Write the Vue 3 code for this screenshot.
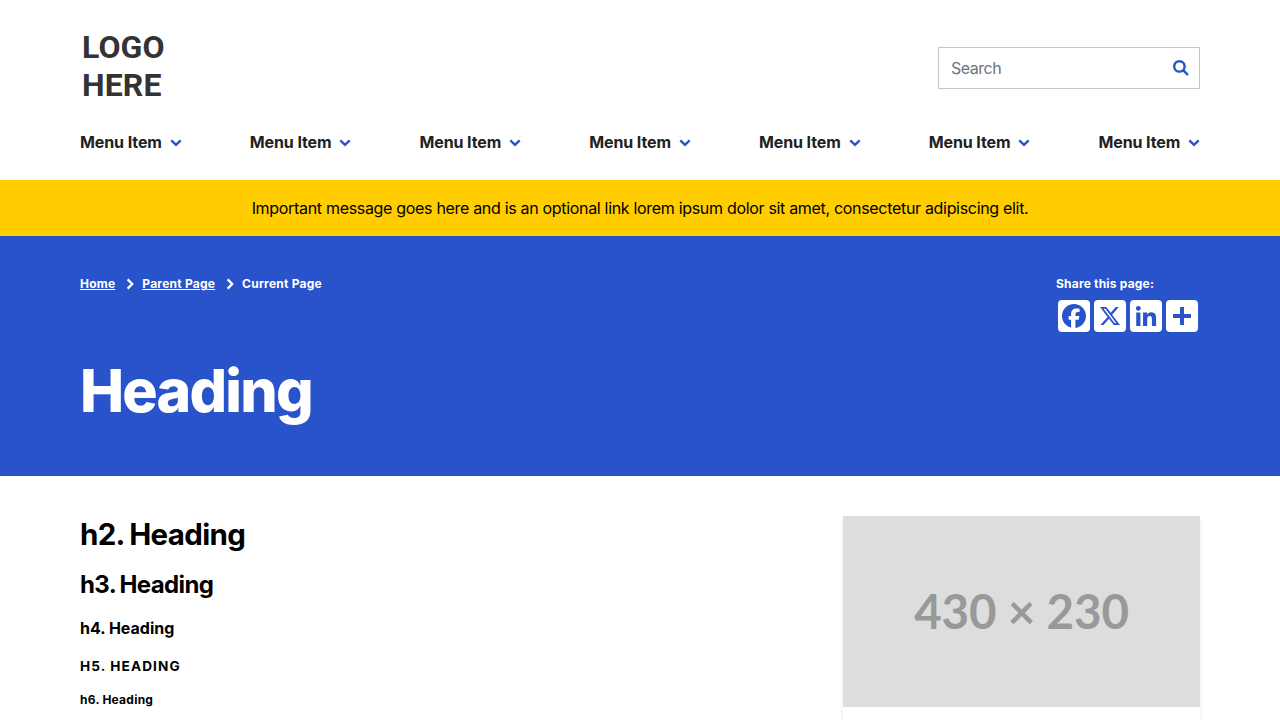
<script setup>
const menu = Array.from({ length: 7 }, (_, i) => ({ id: i, label: 'Menu Item' }))
</script>

<template>
  <div class="page">
    <header class="header wrap">
      <div class="top">
        <div class="logo">LOGO<br />HERE</div>
        <div class="search">
          <span>Search</span>
          <svg class="glass" viewBox="0 0 16 16" width="16" height="16">
            <circle cx="6.4" cy="6.4" r="5.2" />
            <path d="M10.4 10.4L14.3 14.3" />
          </svg>
        </div>
      </div>
      <nav class="menu">
        <a v-for="item in menu" :key="item.id" class="item">
          <span class="label">{{ item.label }}</span>
          <svg class="chev" viewBox="0 0 12 8" width="12" height="8"><path d="M1.3 1.3L6 5.9L10.7 1.3" /></svg>
        </a>
      </nav>
    </header>

    <div class="alert"><span>Important message goes here and is an optional link lorem ipsum dolor sit amet, consectetur adipiscing elit.</span></div>

    <section class="hero">
      <div class="wrap">
        <div class="hero-top">
          <nav class="crumbs">
            <a class="home">Home</a>
            <svg class="arrow" viewBox="0 0 8 12" width="8" height="12"><path d="M1.6 1.4L6.2 6L1.6 10.6" /></svg>
            <a class="parent">Parent Page</a>
            <svg class="arrow" viewBox="0 0 8 12" width="8" height="12"><path d="M1.6 1.4L6.2 6L1.6 10.6" /></svg>
            <span class="current">Current Page</span>
          </nav>
          <div class="share">
            <div class="share-label"><span>Share this page:</span></div>
            <div class="share-icons">
              <svg viewBox="0 0 32 32"><path d="M28 16c0-6.627-5.373-12-12-12S4 9.373 4 16c0 5.628 3.875 10.35 9.101 11.647v-7.98h-2.474V16H13.1v-1.58c0-4.085 1.849-5.978 5.859-5.978.76 0 2.072.15 2.608.298v3.325c-.283-.03-.775-.045-1.386-.045-1.967 0-2.728.745-2.728 2.683V16h3.92l-.673 3.667h-3.247v8.245C23.395 27.195 28 22.135 28 16" /></svg>
              <svg viewBox="0 0 32 32"><path d="M21.751 7h3.067l-6.7 7.658L26 25.078h-6.172l-4.833-6.32-5.531 6.32h-3.07l7.167-8.19L6 7h6.328l4.37 5.777zm-1.076 16.242h1.7L11.404 8.74H9.58z" /></svg>
              <svg viewBox="0 0 32 32"><path d="M6.227 12.61h4.19v13.48h-4.19zm2.095-6.7a2.43 2.43 0 0 1 0 4.86c-1.344 0-2.428-1.09-2.428-2.43s1.084-2.43 2.428-2.43m4.72 6.7h4.02v1.84h.058c.56-1.058 1.927-2.176 3.965-2.176 4.238 0 5.02 2.792 5.02 6.42v7.395h-4.183v-6.56c0-1.564-.03-3.574-2.178-3.574-2.18 0-2.514 1.7-2.514 3.46v6.668h-4.187z" /></svg>
              <svg viewBox="0 0 32 32"><path d="M14 7h4v18h-4z" /><path d="M7 14h18v4H7z" /></svg>
            </div>
          </div>
        </div>
        <h1>Heading</h1>
      </div>
    </section>

    <main class="content wrap">
      <div class="copy">
        <h2>h2. Heading</h2>
        <h3>h3. Heading</h3>
        <h4>h4. Heading</h4>
        <h5>H5. HEADING</h5>
        <h6>h6. Heading</h6>
      </div>
      <aside class="card">
        <div class="placeholder"><span>430 × 230</span></div>
      </aside>
    </main>
  </div>
</template>

<style>
body {
  margin: 0;
  overflow: hidden;
}
</style>

<style scoped>
.page {
  height: 720px;
  overflow: hidden;
  background: #fff;
  color: #000;
  font-family: Inter, "Liberation Sans", sans-serif;
}
.wrap {
  width: 1120px;
  margin: 0 auto;
}
.header {
  height: 180px;
}
.top {
  display: flex;
  justify-content: space-between;
  height: 128px;
}
.logo {
  padding: 28px 0 0 2px;
  font: 700 32px/38px Roboto, sans-serif;
  letter-spacing: 0.1px;
  color: #333;
}
.search {
  display: flex;
  align-items: center;
  justify-content: space-between;
  box-sizing: border-box;
  width: 262px;
  height: 42px;
  margin-top: 47px;
  padding: 0 10px 0 12px;
  border: 1px solid #c6c6c6;
  color: #6b7280;
  font-size: 16px;
  letter-spacing: -0.5px;
}
.glass {
  fill: none;
  stroke: #2853cb;
  stroke-width: 2.4;
  stroke-linecap: round;
}
.menu {
  display: flex;
  justify-content: space-between;
  height: 28px;
}
.item {
  display: flex;
  align-items: center;
  font-weight: 700;
  font-size: 16px;
  letter-spacing: -0.1px;
  color: #212121;
}
.label {
  width: 89.6px;
  white-space: nowrap;
}
.chev {
  margin-top: 1px;
  fill: none;
  stroke: #2853cb;
  stroke-width: 2.4;
}
.alert {
  display: flex;
  align-items: center;
  justify-content: center;
  height: 56px;
  background: #ffcd00;
  font-size: 16px;
  letter-spacing: -0.315px;
}
.hero {
  height: 240px;
  background: #2853cb;
  color: #fff;
}
.hero-top {
  display: flex;
  justify-content: space-between;
  height: 112px;
  padding-top: 40px;
  box-sizing: border-box;
}
.crumbs {
  display: flex;
  height: 16px;
  align-items: center;
  font-weight: 700;
  font-size: 12px;
  line-height: 16px;
  letter-spacing: 0.22px;
}
.crumbs a {
  text-decoration: underline;
}
.arrow {
  margin: 0 8px 0 11px;
  fill: none;
  stroke: #fff;
  stroke-width: 2.3;
}
.share {
  width: 144px;
}
.share-label {
  font-weight: 700;
  font-size: 12px;
  line-height: 16px;
  letter-spacing: 0.2px;
}
.share-icons {
  display: flex;
  gap: 4px;
  padding: 8px 2px 0;
}
.share-icons svg {
  width: 32px;
  height: 32px;
  border-radius: 4px;
  background: #fff;
  fill: #2853cb;
}
h1, h2, h3, h4, h5, h6 {
  margin: 0;
  font-weight: 700;
}
h1 {
  padding-top: 1px;
  font-size: 59px;
  font-weight: 800;
  line-height: 84px;
  letter-spacing: -1.8px;
}
.content {
  display: flex;
  justify-content: space-between;
  padding-top: 40px;
}
.copy {
  white-space: nowrap;
}
h2 {
  font-size: 29.5px;
  line-height: 37px;
  letter-spacing: -0.67px;
  word-spacing: -1px;
}
h3 {
  margin-top: 17px;
  font-size: 24px;
  line-height: 30px;
  letter-spacing: -0.6px;
  word-spacing: -1px;
}
h4 {
  margin-top: 16px;
  font-size: 16px;
  line-height: 24px;
}
h5 {
  margin-top: 16px;
  font-size: 13.6px;
  line-height: 21px;
  letter-spacing: 1.1px;
}
h6 {
  margin-top: 15px;
  font-size: 12px;
  line-height: 16px;
  letter-spacing: 0.25px;
}
.card {
  width: 357px;
  height: 320px;
  background: #fff;
  box-shadow: 0 3px 4px rgba(0, 0, 0, 0.11);
}
.placeholder {
  display: flex;
  align-items: center;
  justify-content: center;
  box-sizing: border-box;
  height: 191px;
  padding-bottom: 2px;
  background: #ddd;
  color: #999;
  font: 700 47.5px/58px Lato, sans-serif;
  letter-spacing: -0.15px;
}
</style>
